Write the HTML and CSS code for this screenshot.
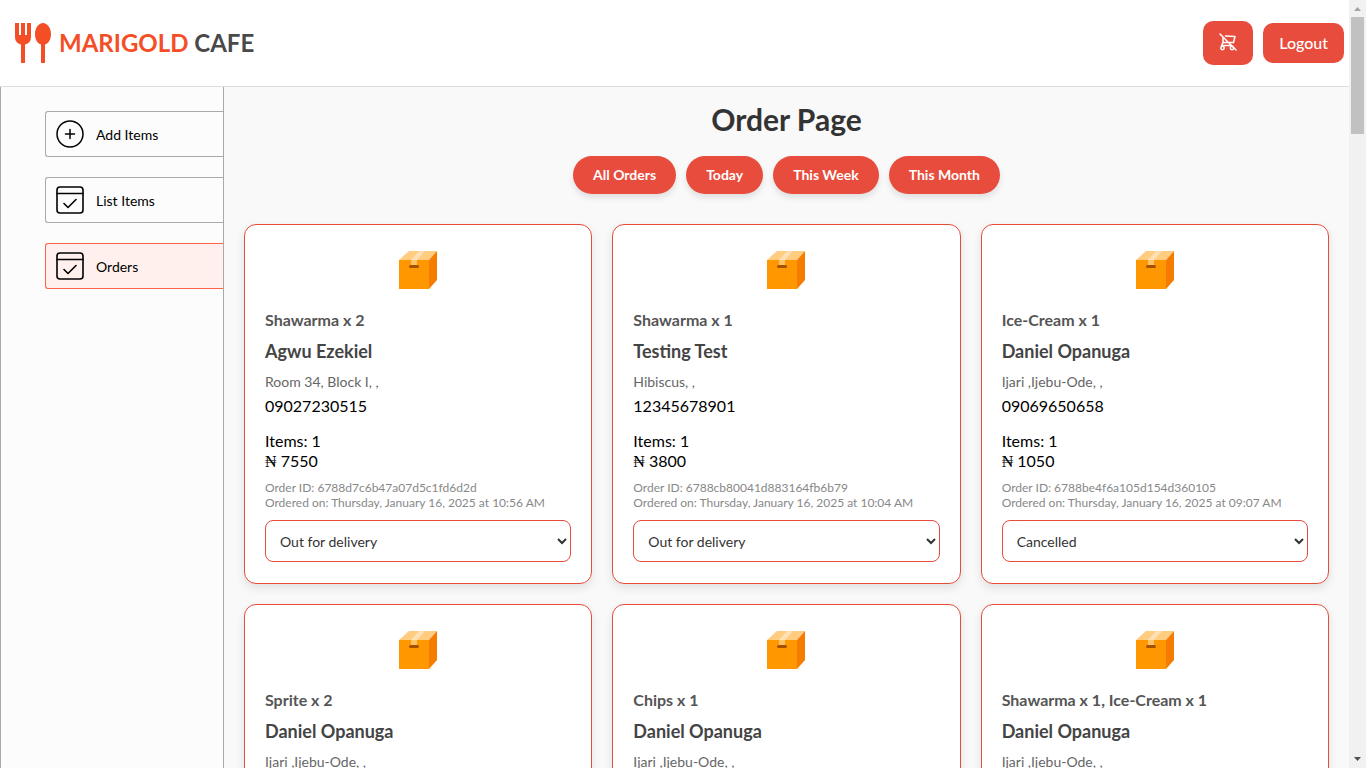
FILE: index.html
```html
<!DOCTYPE html>
<html lang="en">
<head>
<meta charset="utf-8">
<title>Marigold Cafe – Orders</title>
<link rel="stylesheet" href="styles.css">
</head>
<body>
<svg class="sprite" aria-hidden="true">
  <symbol id="box" viewBox="0 0 38 38">
    <path d="M0 9L10 0H38L30 9z" fill="#ffcc80"/>
    <path d="M30 9L38 0V29L30 38z" fill="#f57c00"/>
    <path d="M0 9H30V38H0z" fill="#ff9800"/>
    <path d="M12 9L20 0H26L18 9z" fill="#ffe0b2"/>
    <path d="M12 9H18V14H12z" fill="#ffc266"/>
    <rect x="10" y="14" width="10" height="3" rx="1.5" fill="#a65100"/>
  </symbol>
  <symbol id="list" viewBox="0 0 28 28">
    <g fill="none" stroke="#000" stroke-width="1.6" stroke-linecap="round" stroke-linejoin="round">
      <rect x="1" y="1" width="26" height="26" rx="3"/><path d="M1 7.5H27M8 17.5L12 21.5L20 13.5"/>
    </g>
  </symbol>
</svg>
<div class="window">
  <div class="page">
    <header class="navbar">
      <a class="brand" href="#">
        <svg class="brand-icon" viewBox="0 0 36 40" fill="#f44e26" aria-hidden="true">
          <path d="M0 0H4V12H6V0H10V12H12V0H16V14Q16 20 10 21.500V40H6V21.500Q0 20 0 14z"/>
          <path d="M28 0C32.500 0 36 5 36 11C36 16.500 33.500 20.500 30 21.500V40H26V21.500C22.500 20.500 20 16.500 20 11C20 5 23.500 0 28 0z"/>
        </svg>
        <span class="brand-name">MARIGOLD <span class="brand-suffix">CAFE</span></span>
      </a>
      <div class="actions">
        <button class="btn cart" type="button" aria-label="Close shop">
          <svg width="18" height="18" viewBox="0 0 18 18" fill="none" stroke="#fff" stroke-width="1.500" stroke-linecap="round" stroke-linejoin="round" aria-hidden="true">
            <path d="M1 1L17 17M6.500 3L16 3.500L14.500 9.500H5M4 5V9.500L2.500 12.500H12.500"/><circle cx="3.500" cy="15" r="1.700"/><circle cx="13" cy="15" r="1.700"/>
          </svg>
        </button>
        <button class="btn" type="button">Logout</button>
      </div>
    </header>
    <div class="body">
      <nav class="sidebar">
        <a class="side-link" href="#">
          <svg class="side-icon" viewBox="0 0 28 28" fill="none" stroke="#000" stroke-width="1.500" stroke-linecap="round" aria-hidden="true"><circle cx="14" cy="14" r="13"/><path d="M14 9.500V18.500M9.500 14H18.500"/></svg>
          Add Items</a>
        <a class="side-link" href="#"><svg class="side-icon" aria-hidden="true"><use href="#list"/></svg>List Items</a>
        <a class="side-link active" href="#"><svg class="side-icon" aria-hidden="true"><use href="#list"/></svg>Orders</a>
      </nav>
      <main class="orders">
        <h1 class="title">Order Page</h1>
        <div class="filters">
          <button class="filter" type="button">All Orders</button>
          <button class="filter" type="button">Today</button>
          <button class="filter" type="button">This Week</button>
          <button class="filter" type="button">This Month</button>
        </div>
        <div class="grid">
          <article class="card">
            <svg class="box" aria-hidden="true"><use href="#box"/></svg>
            <p class="food">Shawarma x 2</p>
            <h2 class="name">Agwu Ezekiel</h2>
            <p class="address">Room 34, Block I, ,</p>
            <p class="phone">09027230515</p>
            <p class="line">Items: 1</p>
            <p class="line"><span class="naira">₦</span> 7550</p>
            <div class="meta"><p>Order ID: 6788d7c6b47a07d5c1fd6d2d</p><p>Ordered on: Thursday, January 16, 2025 at 10:56 AM</p></div>
            <select class="status" aria-label="Order status"><option>Food Processing</option><option selected>Out for delivery</option><option>Delivered</option><option>Cancelled</option></select>
          </article>
          <article class="card">
            <svg class="box" aria-hidden="true"><use href="#box"/></svg>
            <p class="food">Shawarma x 1</p>
            <h2 class="name">Testing Test</h2>
            <p class="address">Hibiscus, ,</p>
            <p class="phone">12345678901</p>
            <p class="line">Items: 1</p>
            <p class="line"><span class="naira">₦</span> 3800</p>
            <div class="meta"><p>Order ID: 6788cb80041d883164fb6b79</p><p>Ordered on: Thursday, January 16, 2025 at 10:04 AM</p></div>
            <select class="status" aria-label="Order status"><option>Food Processing</option><option selected>Out for delivery</option><option>Delivered</option><option>Cancelled</option></select>
          </article>
          <article class="card">
            <svg class="box" aria-hidden="true"><use href="#box"/></svg>
            <p class="food">Ice-Cream x 1</p>
            <h2 class="name">Daniel Opanuga</h2>
            <p class="address">Ijari ,Ijebu-Ode, ,</p>
            <p class="phone">09069650658</p>
            <p class="line">Items: 1</p>
            <p class="line"><span class="naira">₦</span> 1050</p>
            <div class="meta"><p>Order ID: 6788be4f6a105d154d360105</p><p>Ordered on: Thursday, January 16, 2025 at 09:07 AM</p></div>
            <select class="status" aria-label="Order status"><option>Food Processing</option><option>Out for delivery</option><option>Delivered</option><option selected>Cancelled</option></select>
          </article>
          <article class="card">
            <svg class="box" aria-hidden="true"><use href="#box"/></svg>
            <p class="food">Sprite x 2</p>
            <h2 class="name">Daniel Opanuga</h2>
            <p class="address">Ijari ,Ijebu-Ode, ,</p>
          </article>
          <article class="card">
            <svg class="box" aria-hidden="true"><use href="#box"/></svg>
            <p class="food">Chips x 1</p>
            <h2 class="name">Daniel Opanuga</h2>
            <p class="address">Ijari ,Ijebu-Ode, ,</p>
          </article>
          <article class="card">
            <svg class="box" aria-hidden="true"><use href="#box"/></svg>
            <p class="food">Shawarma x 1, Ice-Cream x 1</p>
            <h2 class="name">Daniel Opanuga</h2>
            <p class="address">Ijari ,Ijebu-Ode, ,</p>
          </article>
        </div>
      </main>
    </div>
  </div>
  <div class="scrollbar" aria-hidden="true">
    <svg class="arrow" viewBox="0 0 17 17"><path d="M5 11L8.500 7L12 11z" fill="#a3a3a3"/></svg>
    <div class="track"><div class="thumb"></div></div>
    <svg class="arrow" viewBox="0 0 17 17"><path d="M5 6L8.500 10L12 6z" fill="#505050"/></svg>
  </div>
</div>
</body>
</html>
```
FILE: styles.css
```css
* { box-sizing: border-box; margin: 0; padding: 0; }
body, button, select { font-family: Lato, "Liberation Sans", sans-serif; }
body { color: #000; background: #fcfcfc; }
a { color: inherit; text-decoration: none; }
.sprite { display: none; }

.window { display: flex; height: 100vh; overflow: hidden; }
.page { flex: 1; min-width: 0; display: flex; flex-direction: column; }

.scrollbar { width: 17px; background: #f1f1f1; display: flex; flex-direction: column; }
.arrow { width: 17px; height: 17px; }
.track { flex: 1; padding: 0 2px; }
.thumb { height: 16%; background: #c1c1c1; }

.navbar { display: flex; justify-content: space-between; align-items: center; height: 87px; padding: 0 5px 0 15px; background: #fff; border-bottom: 1px solid #ddd; flex-shrink: 0; }
.brand { display: flex; align-items: center; gap: 8px; }
.brand-icon { width: 36px; height: 40px; }
.brand-name { font-size: 24px; font-weight: 700; line-height: 30px; color: #f44e26; }
.brand-suffix { color: #49494b; }
.actions { display: flex; align-items: center; gap: 10px; }
.btn { border: 0; border-radius: 10px; background: #e74c3c; color: #fff; font-size: 16px; font-weight: 500; line-height: 20px; padding: 10px 16px; }
.cart { padding: 12px 16px 14px; }
.cart svg { display: block; }

.body { flex: 1; min-height: 0; display: flex; }
.sidebar { width: 224px; flex-shrink: 0; border: solid #a9a9a9; border-width: 0 1px; padding: 24px 0 0 44px; display: flex; flex-direction: column; gap: 20px; background: #fcfcfc; }
.side-link { display: flex; align-items: center; gap: 12px; height: 46px; padding-left: 10px; border: 1px solid #a9a9a9; border-right: 0; border-radius: 3px 0 0 3px; font-size: 14px; }
.side-icon { width: 28px; height: 28px; }
.active { background: #fff0ed; border-color: tomato; }

.orders { flex: 1; min-width: 0; padding: 15px 20px 0; background: #f9f9f9; overflow: hidden; }
.title { text-align: center; font-size: 30px; line-height: 34px; color: #333; margin-bottom: 20px; }
.filters { display: flex; justify-content: center; gap: 10px; margin-bottom: 30px; }
.filter { border: 0; border-radius: 20px; background: #e74c3c; color: #fff; font-size: 14px; font-weight: 700; line-height: 18px; padding: 10px 20px; box-shadow: 0 4px 6px rgba(0, 0, 0, .1); }

.grid { display: grid; grid-template-columns: repeat(auto-fit, minmax(300px, 1fr)); gap: 20px; }
.card { border: 1px solid #e74c3c; border-radius: 12px; background: #fff; padding: 26px 20px 20px; box-shadow: 0 4px 10px rgba(0, 0, 0, .1); min-height: 360px; }
.box { display: block; width: 38px; height: 38px; margin: 0 auto 21px; }
.food { font-size: 16px; font-weight: 700; line-height: 20px; color: #555; margin-bottom: 10px; }
.name { font-size: 18px; font-weight: 700; line-height: 23px; color: #444; margin-bottom: 10px; }
.address { font-size: 14px; line-height: 18px; color: #666; margin-bottom: 5px; }
.phone { font-size: 16px; line-height: 20px; margin-bottom: 15px; }
.line { font-size: 16px; line-height: 20px; }
.naira { font-family: "Liberation Serif", serif; line-height: 1; }
.meta { font-size: 12px; line-height: 15px; color: #888; margin: 9px 0 10px; }
.status { display: block; width: 100%; height: 42px; padding: 10px; border: 1px solid #e74c3c; border-radius: 8px; background: #fff; color: #333; font-size: 14px; }
```
